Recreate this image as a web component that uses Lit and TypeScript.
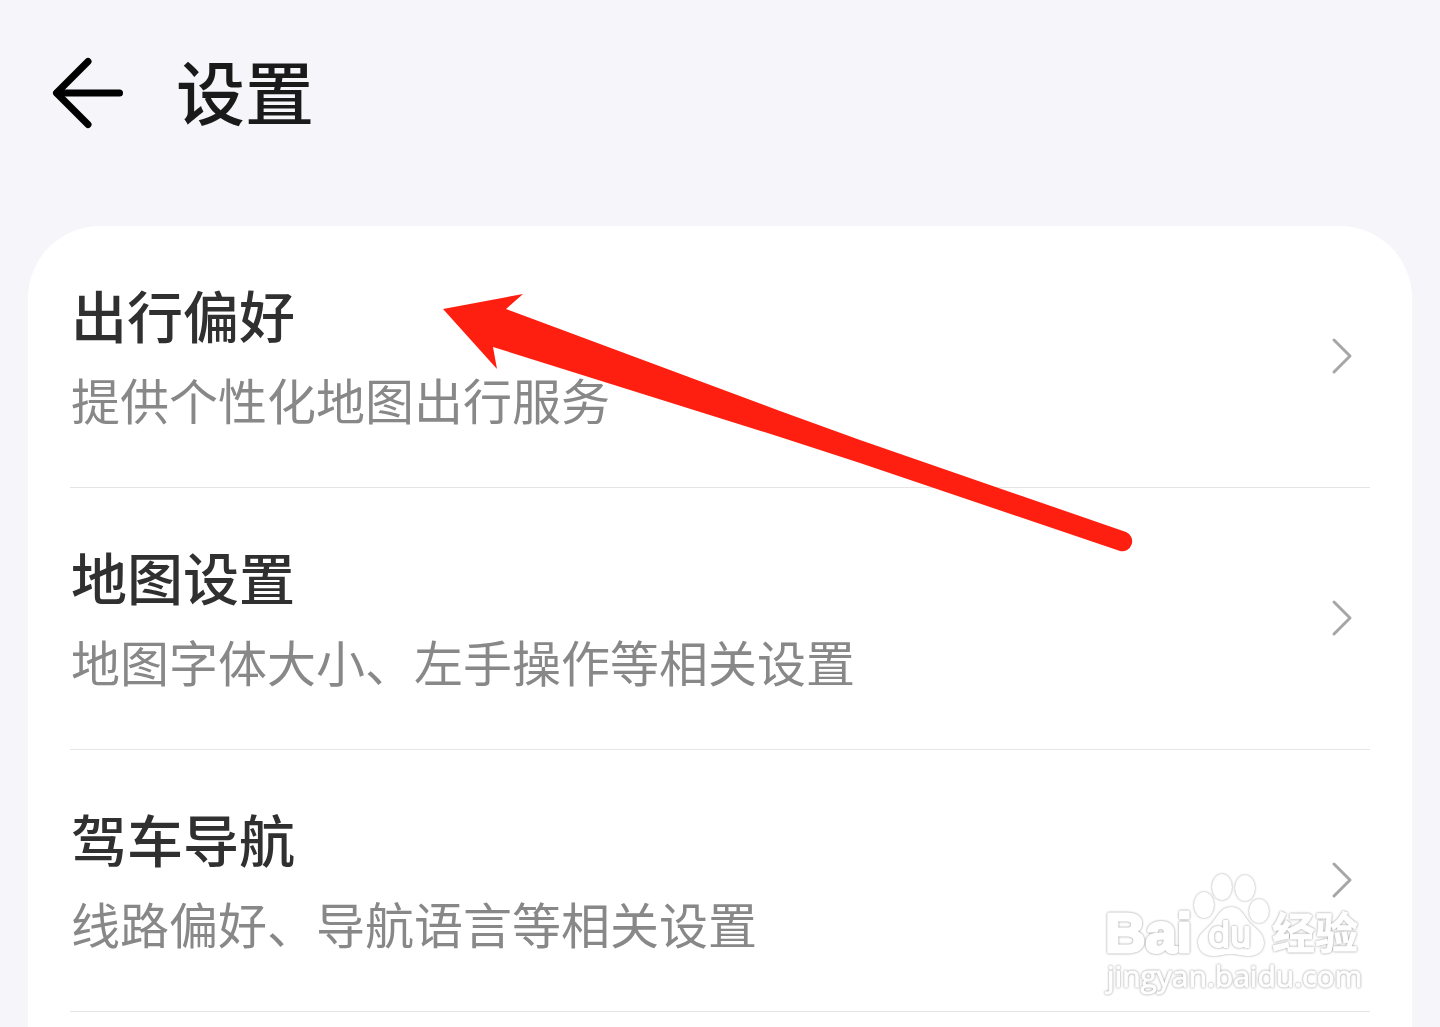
import { LitElement, html, css, svg } from "lit";
import { customElement, property } from "lit/decorators.js";

interface SettingsEntry {
  title: string;
  detail: string;
  href: string;
}

const ENTRIES: SettingsEntry[] = [
  { title: "出行偏好", detail: "提供个性化地图出行服务", href: "#travel" },
  { title: "地图设置", detail: "地图字体大小、左手操作等相关设置", href: "#map" },
  { title: "驾车导航", detail: "线路偏好、导航语言等相关设置", href: "#driving" },
];

@customElement("settings-row")
export class SettingsRow extends LitElement {
  @property() heading = "";
  @property() detail = "";
  @property() href = "#";

  static styles = css`
    :host {
      display: block;
    }
    .row {
      display: flex;
      align-items: center;
      justify-content: space-between;
      padding: 45px 17px 46px 1px;
      border-bottom: 1px solid #e5e5e5;
      color: inherit;
      text-decoration: none;
    }
    .text {
      display: flex;
      flex-direction: column;
    }
    .heading {
      font-size: 56px;
      line-height: 86px;
      font-weight: 500;
      color: #303030;
    }
    .detail {
      font-size: 49px;
      line-height: 84px;
      font-weight: 400;
      color: #888888;
    }
    .chevron {
      flex: none;
      width: 22px;
      height: 38px;
      fill: none;
      stroke: #a6a6a6;
      stroke-width: 3;
      stroke-linecap: round;
      stroke-linejoin: round;
    }
  `;

  render() {
    return html`
      <a class="row" href=${this.href}>
        <span class="text">
          <span class="heading">${this.heading}</span>
          <span class="detail">${this.detail}</span>
        </span>
        <svg class="chevron" viewBox="0 0 22 38" aria-hidden="true">
          <path d="M3 3L19 19L3 35" />
        </svg>
      </a>
    `;
  }
}

@customElement("site-watermark")
export class SiteWatermark extends LitElement {
  static styles = css`
    :host {
      display: block;
    }
    .mark {
      display: block;
      width: 270px;
      height: 130px;
    }
    .shape {
      fill: #ffffff;
      filter: drop-shadow(0 0 1px #a0a0a0);
    }
    .word {
      fill: #ffffff;
      stroke: #ffffff;
      stroke-width: 1;
      stroke-linejoin: round;
      filter: drop-shadow(0 0 1px #909090);
    }
    .latin {
      font-size: 56px;
      font-weight: 700;
      font-family: "Liberation Sans", sans-serif;
      stroke-width: 3;
    }
    .inner {
      font-size: 36px;
      font-family: Inter, sans-serif;
      stroke-width: 2;
    }
    .han {
      font-size: 43px;
      font-weight: 700;
      font-family: "Noto Sans CJK SC", sans-serif;
    }
    .site {
      font-size: 30px;
      font-family: "Open Sans", sans-serif;
    }
  `;

  render() {
    const toes = [
      [104, 35, 10, 13],
      [122, 17, 10, 13],
      [145, 18, 10, 13],
      [159, 41, 10, 12],
    ];
    return html`
      <svg class="mark" viewBox="0 0 270 130" role="img" aria-label="Baidu 经验">
        <text class="word latin" x="5" y="82">Bai</text>
        ${toes.map(
          ([cx, cy, rx, ry]) =>
            svg`<ellipse class="shape" cx=${cx} cy=${cy} rx=${rx} ry=${ry} />`
        )}
        <path
          class="shape"
          d="M131 37C142 37 144 47 151 54C158 60 164 65 164 73C164 81 157 86 149 86C142 86 138 84 131 84C124 84 120 86 113 86C104 86 98 80 98 72C98 64 106 60 112 53C118 46 121 37 131 37Z"
        />
        <text class="word inner" x="108" y="77">du</text>
        <text class="word han" x="172" y="79">经验</text>
        <text class="word site" x="7" y="117">jingyan.baidu.com</text>
      </svg>
    `;
  }
}

@customElement("app-root")
export class AppRoot extends LitElement {
  static styles = css`
    :host {
      display: block;
      font-family: "Noto Sans CJK SC", sans-serif;
    }
    .page {
      position: relative;
      box-sizing: border-box;
      min-height: 100vh;
      display: flex;
      flex-direction: column;
      padding: 0 28px;
      overflow: hidden;
      background: #f5f5fa;
    }
    .bar {
      display: flex;
      align-items: center;
      gap: 50px;
      padding: 35px 22px 75px;
    }
    .back {
      display: flex;
      padding: 0;
      border: 0;
      background: none;
      cursor: pointer;
    }
    .back-icon {
      width: 76px;
      height: 76px;
      fill: none;
      stroke: #000000;
      stroke-width: 7;
      stroke-linecap: round;
      stroke-linejoin: round;
    }
    .title {
      margin: 0;
      padding-bottom: 6px;
      font-size: 69px;
      line-height: 110px;
      font-weight: 500;
      color: #1a1a1a;
    }
    .card {
      flex: 1;
      padding: 0 42px;
      background: #ffffff;
      border-radius: 72px 72px 0 0;
    }
    .pointer {
      position: absolute;
      left: 440px;
      top: 290px;
      width: 696px;
      height: 264px;
      fill: #ff1f10;
      pointer-events: none;
    }
    .watermark {
      position: absolute;
      right: 70px;
      bottom: 27px;
      pointer-events: none;
    }
  `;

  render() {
    return html`
      <div class="page">
        <header class="bar">
          <button class="back" type="button" aria-label="返回">
            <svg class="back-icon" viewBox="0 0 76 76" aria-hidden="true">
              <path d="M38 6.5L6.5 38L38 69.5" />
              <path d="M7 38H69.5" />
            </svg>
          </button>
          <h1 class="title">设置</h1>
        </header>
        <main class="card">
          ${ENTRIES.map(
            (e) => html`
              <settings-row
                .heading=${e.title}
                .detail=${e.detail}
                .href=${e.href}
              ></settings-row>
            `
          )}
        </main>
        <svg class="pointer" viewBox="440 290 696 264" aria-hidden="true">
          <path
            d="M443 309L523 294L506 309L780 411L860 440L1126 532A10 10 0 0 1 1120 551L860 463L780 437L493 347L497 369Z"
          />
        </svg>
        <site-watermark class="watermark"></site-watermark>
      </div>
    `;
  }
}
